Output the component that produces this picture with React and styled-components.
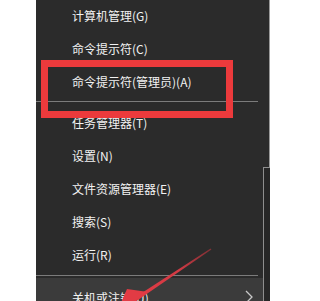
import React from "react";
import styled, { createGlobalStyle } from "styled-components";

const GlobalStyle = createGlobalStyle`
  html, body {
    margin: 0;
    padding: 0;
    background: #ffffff;
  }
`;

const Page = styled.div`
  position: relative;
  width: 298px;
  height: 301px;
  overflow: hidden;
  background: #ffffff;
  padding-left: 36px;
  box-sizing: border-box;
  display: flex;
  font-family: "Noto Sans CJK SC", "Microsoft YaHei", sans-serif;
`;

const Menu = styled.div`
  width: 234px;
  height: 100%;
  display: flex;
  background: #2b2b2b;
`;

const List = styled.div`
  width: 227px;
  display: flex;
  flex-direction: column;
  padding-top: 0;
  margin-top: -1px;
`;

const Gutter = styled.div`
  flex: 1;
  display: flex;
  flex-direction: column;
`;

const GutterTop = styled.div`
  height: 167px;
  background: #2b2b2b;
  border-right: 1px solid #9a9a9a;
`;

const GutterBottom = styled.div`
  flex: 1;
  background: #272727;
  border-left: 1px solid #8e8e8e;
  border-top: 1px solid #8e8e8e;
`;

const Item = styled.div`
  flex: none;
  height: ${(p) => p.$h || 33}px;
  margin-top: ${(p) => p.$mt || 0}px;
  padding-left: 36px;
  padding-right: 10px;
  display: flex;
  align-items: center;
  justify-content: space-between;
  color: #f2f2f2;
  font-size: 12px;
  background: ${(p) => (p.$active ? "#3b3b3b" : "transparent")};
`;

const Separator = styled.div`
  flex: none;
  height: 1px;
  margin-top: ${(p) => p.$mt || 0}px;
  margin-bottom: ${(p) => p.$mb || 0}px;
  margin-right: 5px;
  background: #7c7c7c;
`;

const Highlight = styled.div`
  position: absolute;
  left: 41px;
  top: 60px;
  width: 192px;
  height: 58px;
  box-sizing: border-box;
  border: 7px solid #ec3a3c;
  pointer-events: none;
`;

const ArrowLayer = styled.svg`
  position: absolute;
  left: 0;
  top: 0;
  pointer-events: none;
`;

function Chevron() {
  return (
    <svg width="8" height="14" viewBox="0 0 8 14">
      <path d="M1 1 L7 7 L1 13" fill="none" stroke="#c8c8c8" strokeWidth="1.3" />
    </svg>
  );
}

export default function App() {
  return (
    <>
      <GlobalStyle />
      <Page>
        <Menu>
          <List>
            <Item>计算机管理(G)</Item>
            <Item>命令提示符(C)</Item>
            <Item>命令提示符(管理员)(A)</Item>
            <Separator $mt={3} />
            <Item $mt={4}>任务管理器(T)</Item>
            <Item>设置(N)</Item>
            <Item>文件资源管理器(E)</Item>
            <Item>搜索(S)</Item>
            <Item>运行(R)</Item>
            <Separator $mt={4} $mb={2} />
            <Item $h={38} $active>
              关机或注销(U)
              <Chevron />
            </Item>
          </List>
          <Gutter>
            <GutterTop />
            <GutterBottom />
          </Gutter>
        </Menu>
        <Highlight />
        <ArrowLayer width="298" height="301" viewBox="0 0 298 301">
          <defs>
            <linearGradient id="arrowFade" x1="211" y1="249" x2="130" y2="303" gradientUnits="userSpaceOnUse">
              <stop offset="0" stopColor="#b8343c" stopOpacity="0.6" />
              <stop offset="0.4" stopColor="#d33a44" />
              <stop offset="1" stopColor="#e23b44" />
            </linearGradient>
          </defs>
          <polygon
            points="211.4,249.6 210.6,248.4 128.9,301.3 131.1,304.7"
            fill="url(#arrowFade)"
          />
          <polygon points="148,292 127,289 117,312" fill="#e23b44" />
        </ArrowLayer>
      </Page>
    </>
  );
}
